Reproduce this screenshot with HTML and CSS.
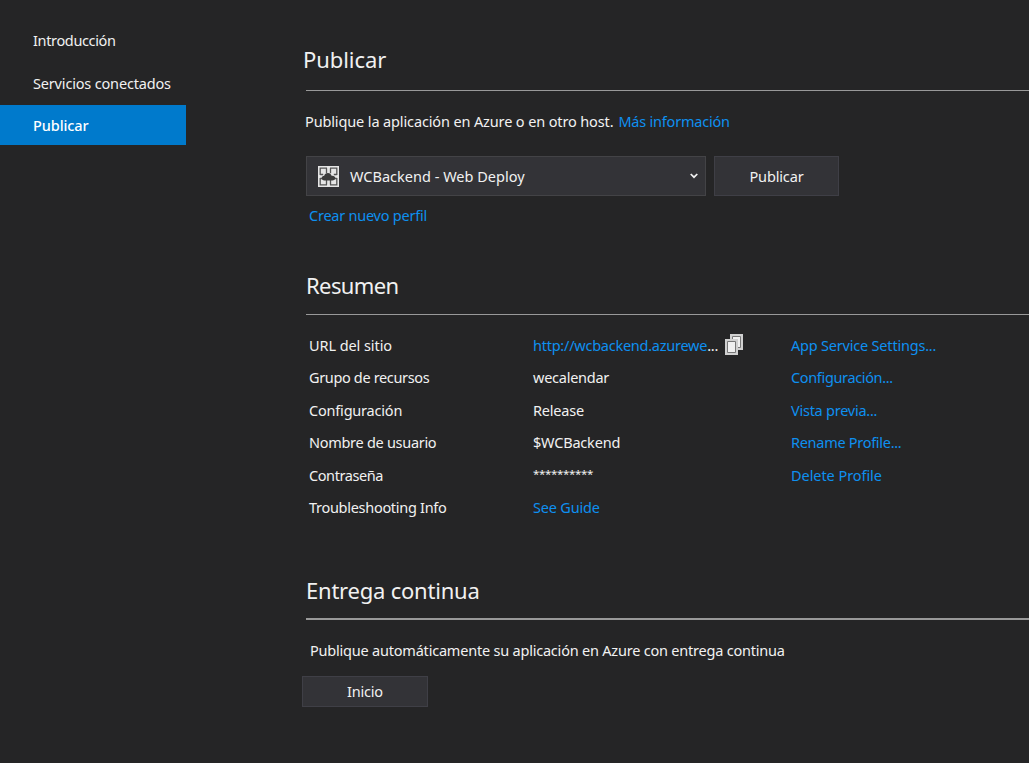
FILE: index.html
```
<!DOCTYPE html>
<html lang="es">
<head>
<meta charset="utf-8">
<title>Publicar</title>
<link rel="stylesheet" href="styles.css">
</head>
<body>
<div class="app">
  <nav class="sidebar">
    <a class="nav-item"><span class="t-intro">Introducción</span></a>
    <a class="nav-item"><span class="t-services">Servicios conectados</span></a>
    <a class="nav-item active"><span class="t-nav">Publicar</span></a>
  </nav>
  <main class="content">
    <section class="publish">
      <h1 class="title title-main"><span class="t-h1">Publicar</span></h1>
      <p class="lead"><span class="t-lead">Publique la aplicación en Azure o en otro host.</span><a class="link"><span class="t-more">Más información</span></a></p>
      <div class="controls">
        <div class="combo">
          <svg class="profile-icon" width="21" height="21" viewBox="0 0 21 21">
            <path fill="#e6e6e6" d="M0 0h21v21H0z"/>
            <path fill="none" stroke="#555" stroke-width="1.300" d="M9 2.200H2.200V9M12 2.200h6.800V9M2.200 12v6.800H9M18.800 12v6.800H12M8.500 2.200v5M12.500 2.200v5M8.500 18.800v-5M12.500 18.800v-5M2.200 8.500h3M2.200 12.500h3M18.800 8.500h-3M18.800 12.500h-3"/>
            <path fill="#3c3c3c" d="M6.500 14.500c-1.800 0-2.800-1-2.800-2.400 0-1.300 1-2.300 2.500-2.300C6.700 8 8 7 10 7c1.800 0 3.100 1.200 3.600 2.700 2.300-.2 3.700.8 3.700 2.400 0 1.500-1.200 2.400-3 2.400z"/>
          </svg>
          <span class="t-combo">WCBackend - Web Deploy</span>
          <svg class="chevron" width="8" height="6" viewBox="0 0 8 6"><path d="M.7 1 4 4.200 7.300 1" fill="none" stroke="#f1f1f1" stroke-width="1.700"/></svg>
        </div>
        <button class="btn btn-publish"><span class="t-btn">Publicar</span></button>
      </div>
      <a class="link create"><span class="t-create">Crear nuevo perfil</span></a>
    </section>

    <section class="summary">
      <h2 class="title"><span class="t-h2">Resumen</span></h2>
      <div class="columns">
        <div class="col labels">
          <span class="t-url">URL del sitio</span>
          <span class="t-group">Grupo de recursos</span>
          <span class="t-config">Configuración</span>
          <span class="t-user">Nombre de usuario</span>
          <span class="t-pass">Contraseña</span>
          <span class="t-trouble">Troubleshooting Info</span>
        </div>
        <div class="col values">
          <div class="site"><span class="t-site"><a class="link">http://wcbackend.azurewe</a>...</span>
            <svg class="copy" width="18" height="21" viewBox="0 0 18 21">
              <path fill="#d0d0d0" d="M5 0h13v16H5z"/><path fill="#f0f0f0" stroke="#777" d="M7.500 2.500h8v11h-8z"/>
              <path fill="#d0d0d0" d="M0 5h13v16H0z"/><path fill="#f0f0f0" stroke="#777" d="M2.500 7.500h8v11h-8z"/>
            </svg>
          </div>
          <span class="t-we">wecalendar</span>
          <span class="t-release">Release</span>
          <span class="t-wcb">$WCBackend</span>
          <span class="t-stars">**********</span>
          <a class="link"><span class="t-guide">See Guide</span></a>
        </div>
        <div class="col actions">
          <a class="link"><span class="t-app">App Service Settings...</span></a>
          <a class="link"><span class="t-conf">Configuración...</span></a>
          <a class="link"><span class="t-vista">Vista previa...</span></a>
          <a class="link"><span class="t-rename">Rename Profile...</span></a>
          <a class="link"><span class="t-delete">Delete Profile</span></a>
        </div>
      </div>
    </section>

    <section class="delivery">
      <h2 class="title title-thick"><span class="t-h3">Entrega continua</span></h2>
      <p class="delivery-text"><span class="t-auto">Publique automáticamente su aplicación en Azure con entrega continua</span></p>
      <button class="btn btn-start"><span class="t-start">Inicio</span></button>
    </section>
  </main>
</div>
</body>
</html>
```

FILE: styles.css
```
* { box-sizing: border-box; }
body {
  margin: 0;
  background: #252526;
  color: #f1f1f1;
  font: 14.5px/20px "Noto Sans", "Open Sans", sans-serif;
  letter-spacing: -0.35px;
  white-space: nowrap;
  overflow: hidden;
}
h1, h2, p { margin: 0; font-weight: 400; }
.app { display: flex; height: 763px; }
.sidebar { width: 186px; flex: none; padding-top: 20px; }
.nav-item { display: flex; align-items: center; height: 40px; padding-left: 33px; margin-bottom: 3px; }
.nav-item.active { background: #007acc; color: #fff; margin-top: -1px; }
.content { flex: 1; padding: 45px 0 0 120px; }
.link { color: #0e90f0; }

.title {
  height: 45px;
  border-bottom: 1px solid #999;
  font-size: 22px;
  line-height: 30px;
}
.title-main { height: 46px; line-height: 28px; }
.title-main span { margin-left: -3px; }
.title-thick { border-bottom-width: 2px; }

.publish { height: 225px; }
.lead { display: flex; gap: 5px; margin: 20px 0 25px -1px; }
.controls { display: flex; gap: 8px; }
.combo {
  display: flex;
  align-items: center;
  width: 400px;
  height: 40px;
  padding: 0 7px 0 11px;
  background: #333337;
  border: 1px solid #434346;
}
.profile-icon { margin-right: 11px; }
.chevron { margin-left: auto; }
.btn {
  padding: 0;
  background: #333337;
  border: 1px solid #3f3f46;
  color: inherit;
  font: inherit;
  letter-spacing: inherit;
}
.btn-publish { width: 125px; height: 40px; }
.create { display: block; margin: 9px 0 0 3px; }

.summary { height: 305px; }
.columns { display: grid; grid-template-columns: 224px 258px 1fr; padding: 13.7px 0 0 3px; }
.col { display: grid; grid-auto-rows: 32.5px; align-items: center; align-content: start; }
.site { display: flex; align-items: center; gap: 7px; }
.copy { margin-top: -1px; }

.delivery-text { margin: 20px 0 16px 4px; }
.btn-start { display: block; width: 126px; height: 31px; margin-left: -4px; padding-bottom: 2px; }

/* Per-label tracking */
.t-services { letter-spacing: -0.17px; }
.t-nav { letter-spacing: -0.1px; font-weight: 500; }
.t-h1 { letter-spacing: -0.06px; }
.t-h2 { letter-spacing: -0.6px; }
.t-h3 { letter-spacing: -0.22px; }
.t-lead { letter-spacing: -0.13px; }
.t-more { letter-spacing: -0.22px; }
.t-combo { letter-spacing: 0.01px; }
.t-btn { letter-spacing: -0.15px; }
.t-create { letter-spacing: -0.24px; }
.t-url { letter-spacing: -0.08px; }
.t-config, .t-release, .t-wcb, .t-guide, .t-app, .t-start { letter-spacing: -0.2px; }
.t-auto { letter-spacing: -0.21px; }
.t-user, .t-trouble, .t-rename { letter-spacing: -0.29px; }
.t-pass { letter-spacing: -0.42px; }
.t-site, .t-we, .t-vista { letter-spacing: -0.25px; }
.t-delete { letter-spacing: -0.06px; }
.t-stars { font-size: 11.5px; padding-bottom: 2px; }
```
